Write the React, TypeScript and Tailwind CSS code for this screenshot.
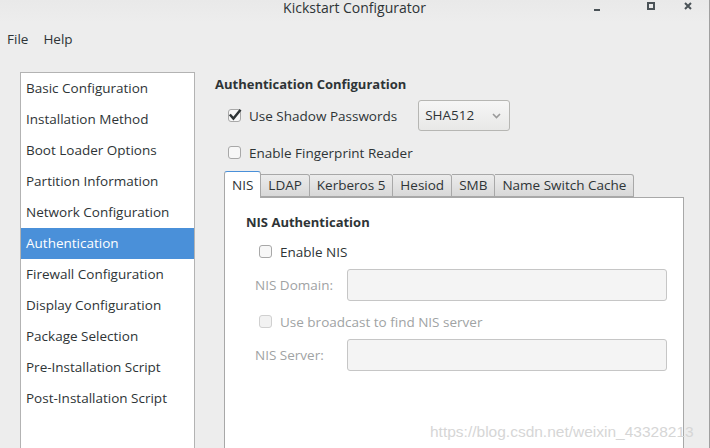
import React from "react";

const items = [
  "Basic Configuration",
  "Installation Method",
  "Boot Loader Options",
  "Partition Information",
  "Network Configuration",
  "Authentication",
  "Firewall Configuration",
  "Display Configuration",
  "Package Selection",
  "Pre-Installation Script",
  "Post-Installation Script",
];

function Check({ checked, disabled }: { checked?: boolean; disabled?: boolean }) {
  return (
    <svg width="14" height="14" viewBox="0 0 14 14" className="shrink-0 overflow-visible">
      <rect
        x="0.5"
        y="0.5"
        width="12"
        height="12"
        rx="2.5"
        fill={disabled ? "#f2f2f2" : "#f7f7f7"}
        stroke={disabled ? "#d0d0d0" : "#a8a8a8"}
      />
      {checked && (
        <path d="M2.6 6.4 L5.4 9.6 L11.8 1.6" fill="none" stroke="#2e3436" strokeWidth="2.4" strokeLinecap="square" />
      )}
    </svg>
  );
}

export default function App() {
  const font = { fontFamily: '"Open Sans", "DejaVu Sans", sans-serif' };
  return (
    <div
      className="relative w-[710px] h-[448px] overflow-hidden bg-[#ededed] text-[#2e3436] text-[13.5px] border-r border-[#a0a0a0] flex flex-col"
      style={font}
    >
      {/* Title bar */}
      <div className="relative h-[22px] shrink-0 bg-gradient-to-b from-[#e9e9e9] to-[#ededed]">
        <div className="text-center leading-[16px] text-[#2e3436] text-[14px]">Kickstart Configurator</div>
        <div className="absolute left-[594px] top-[9px] w-[6px] h-[2px] bg-[#4a5257]" />
        <div className="absolute left-[647px] top-[2px] w-[8px] h-[8px] border-[2px] border-[#4a5257]" />
        <svg className="absolute left-[684px] top-[2px]" width="8" height="8" viewBox="0 0 8 8">
          <path d="M1 1 L7 7 M7 1 L1 7" stroke="#4a5257" strokeWidth="2" />
        </svg>
      </div>
      {/* Menu bar */}
      <div className="h-[34px] shrink-0 flex items-center pl-[7px] gap-[15px]">
        <span>File</span>
        <span>Help</span>
      </div>
      {/* Body */}
      <div className="flex-1 flex pl-[20px] pt-[16px] min-h-0">
        <div className="w-[175px] shrink-0 bg-white border border-[#b3b3b3] border-b-0 flex flex-col">
          {items.map((it) => (
            <div
              key={it}
              className={
                "h-[31px] shrink-0 flex items-center pl-[5px] " +
                (it === "Authentication" ? "bg-[#4a90d9] text-white" : "")
              }
            >
              {it}
            </div>
          ))}
        </div>
        <div className="flex-1 flex flex-col pl-[20px] pt-[3px]">
          <div className="font-bold leading-[18px] text-[13px]">Authentication Configuration</div>
          <div className="mt-[7px] flex items-center pl-[13px]">
            <Check checked />
            <span className="ml-[7px] relative top-[1px]">Use Shadow Passwords</span>
            <div className="ml-[21px] w-[92px] h-[31px] rounded-[3px] border border-[#b6b6b3] bg-gradient-to-b from-[#f6f6f6] to-[#e8e8e7] flex items-center pl-[6px] pr-[8px] justify-between">
              <span>SHA512</span>
              <svg width="9" height="6" viewBox="0 0 9 6">
                <path d="M1 1 L4.5 4.5 L8 1" fill="none" stroke="#9a9a9a" strokeWidth="1.6" />
              </svg>
            </div>
          </div>
          <div className="mt-[12px] h-[20px] flex items-center pl-[13px]">
            <Check />
            <span className="ml-[7px]">Enable Fingerprint Reader</span>
          </div>
          {/* Tabs */}
          <div className="mt-[8px] ml-[9px] flex items-end h-[26px]">
            <div className="h-[27px] px-[7px] bg-white border border-[#a8a8a8] border-b-0 border-t-[#4a90d9] rounded-t-[3px] flex items-center relative z-10 -mb-px">
              NIS
            </div>
            {["LDAP", "Kerberos 5", "Hesiod", "SMB", "Name Switch Cache"].map((t) => (
              <div
                key={t}
                className="h-[23px] px-[7px] bg-gradient-to-b from-[#ececec] to-[#d8d8d8] border border-[#a8a8a8] border-l-0 rounded-tr-[3px] flex items-center"
              >
                {t}
              </div>
            ))}
          </div>
          <div className="ml-[9px] w-[460px] flex-1 bg-white border border-[#a8a8a8] border-b-0 flex flex-col pl-[21px] pt-[15px]">
            <div className="font-bold leading-[18px] text-[13px]">NIS Authentication</div>
            <div className="mt-[11px] h-[20px] flex items-center pl-[13px]">
              <Check />
              <span className="ml-[7px]">Enable NIS</span>
            </div>
            <div className="mt-[7px] flex items-center pl-[9px]">
              <span className="w-[92px] text-[#a0a3a4]">NIS Domain:</span>
              <div className="w-[320px] h-[32px] rounded-[3px] border border-[#c6c6c6] bg-[#f4f4f4]" />
            </div>
            <div className="mt-[11px] h-[20px] flex items-center pl-[13px]">
              <Check disabled />
              <span className="ml-[7px] text-[#a0a3a4]">Use broadcast to find NIS server</span>
            </div>
            <div className="mt-[7px] flex items-center pl-[9px]">
              <span className="w-[92px] text-[#a0a3a4]">NIS Server:</span>
              <div className="w-[320px] h-[32px] rounded-[3px] border border-[#c6c6c6] bg-[#f4f4f4]" />
            </div>
          </div>
        </div>
      </div>
      <div
        className="absolute left-[430px] top-[420px] whitespace-nowrap text-[15.5px] text-[#d6d6d6] pointer-events-none"
        style={{ fontFamily: '"Liberation Sans", Arial, sans-serif' }}
      >
        https://blog.csdn.net/weixin_43328213
      </div>
    </div>
  );
}
